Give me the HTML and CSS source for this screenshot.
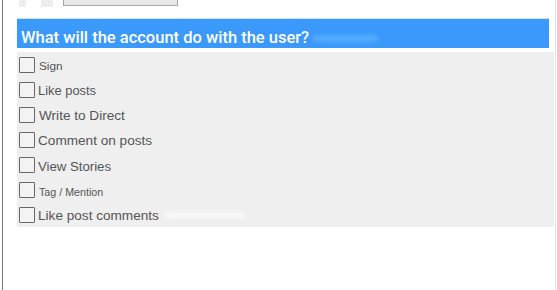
FILE: index.html
```html
<!DOCTYPE html>
<html>
<head>
<meta charset="utf-8">
<link rel="stylesheet" href="styles.css">
</head>
<body>
<div class="page">
  <div class="topstrip">
    <span class="tab tab-a"></span>
    <span class="tab tab-b"></span>
    <span class="topbtn"></span>
  </div>
  <div class="question">What will the account do with the user?<span class="smear smear-blue"></span></div>
  <div class="options">
    <label class="opt"><span class="box"></span><span class="txt s-sign">Sign</span></label>
    <label class="opt"><span class="box"></span><span class="txt s-like">Like posts</span></label>
    <label class="opt"><span class="box"></span><span class="txt s-write">Write to Direct</span></label>
    <label class="opt"><span class="box"></span><span class="txt s-comment">Comment on posts</span></label>
    <label class="opt"><span class="box"></span><span class="txt s-view">View Stories</span></label>
    <label class="opt"><span class="box"></span><span class="txt s-tag">Tag / Mention</span></label>
    <label class="opt"><span class="box"></span><span class="txt s-likec">Like post comments</span><span class="smear smear-white"></span></label>
  </div>
</div>
</body>
</html>
```

FILE: styles.css
```css
html, body {
  margin: 0;
  padding: 0;
  background: #ffffff;
}

body {
  font-family: "Liberation Sans", Arial, sans-serif;
  width: 557px;
  height: 290px;
  overflow: hidden;
}

.page {
  margin-left: 2px;
  width: 538px;
  height: 290px;
  border-left: 1px solid #767676;
  border-right: 1px solid #e2e2e2;
  padding-left: 14px;
  display: flex;
  flex-direction: column;
}

.topstrip {
  height: 7px;
  display: flex;
  align-items: flex-start;
}

.tab {
  display: block;
  height: 7px;
  background: #ededed;
}

.tab-a {
  margin-left: 2px;
  width: 7px;
}

.tab-b {
  margin-left: 15px;
  width: 12px;
}

.topbtn {
  display: block;
  margin-left: 10px;
  width: 113px;
  height: 5px;
  background: #e8e8e8;
  border: 1px solid #a6a6a6;
  border-top: none;
}

.question {
  margin-top: 11px;
  width: 532px;
  height: 30px;
  box-sizing: border-box;
  border-top: 1px solid #c4e6ff;
  background: #3a99fb;
  color: #ffffff;
  font-family: Roboto, "Liberation Sans", sans-serif;
  font-weight: 500;
  font-size: 16.5px;
  line-height: 21px;
  padding-top: 8px;
  padding-left: 4px;
  white-space: nowrap;
}

.smear {
  display: inline-block;
  vertical-align: middle;
}

.smear-blue {
  margin-left: 3px;
  width: 66px;
  height: 7px;
  background: #55abff;
  filter: blur(2px);
  border-radius: 3px;
}

.options {
  margin-top: 4px;
  width: 535px;
  background: #efefef;
  padding: 5px 0 4px 2px;
  display: flex;
  flex-direction: column;
  gap: 9px;
}

.opt {
  height: 16px;
  display: flex;
  align-items: flex-end;
}

.box {
  flex: none;
  width: 14px;
  height: 14px;
  border: 1px solid #686868;
  border-radius: 1px;
  background: #f3f3f3;
}

.txt {
  margin-left: 3px;
  color: #555555;
  line-height: 1;
  white-space: nowrap;
}

.s-sign { font-size: 11.8px; margin-left: 4px; }
.s-like { font-size: 12.9px; }
.s-write { font-size: 13.6px; margin-left: 4px; }
.s-comment { font-size: 13.6px; }
.s-view { font-size: 13.2px; }
.s-tag { font-size: 10.7px; margin-left: 4px; }
.s-likec { font-size: 13.6px; }

.smear-white {
  align-self: center;
  margin-left: 6px;
  width: 80px;
  height: 6px;
  background: #f8f8f8;
  filter: blur(2px);
}
```
